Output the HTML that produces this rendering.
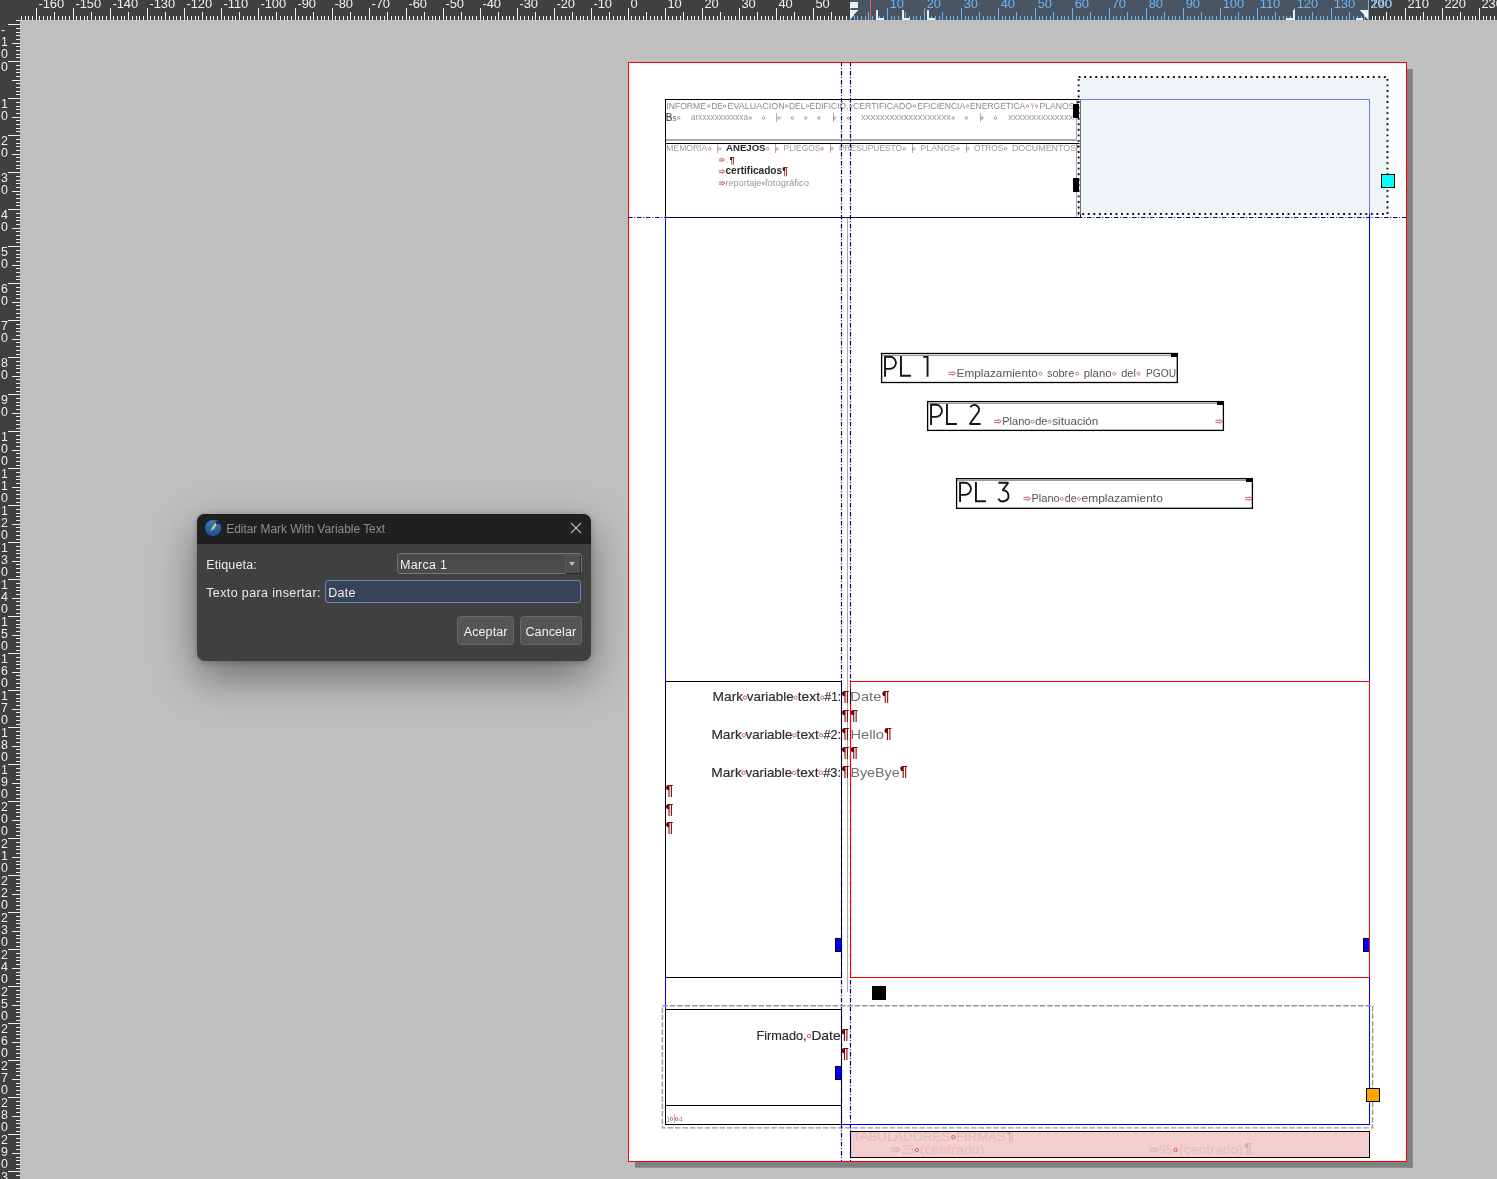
<!DOCTYPE html>
<html><head><meta charset="utf-8"><title>Scribus</title><style>
html,body{margin:0;padding:0;}
body{width:1497px;height:1179px;overflow:hidden;background:#bfbfbf;font-family:"Liberation Sans", sans-serif;position:relative;}
svg.cv{position:absolute;left:0;top:0;}
svg#pg{will-change:transform;}
svg.cv text{font-family:"Liberation Sans", sans-serif;white-space:pre;}
#dlg{position:absolute;left:197px;top:514px;width:394px;height:147px;background:#404040;border-radius:8px;overflow:hidden;box-shadow:0 16px 44px rgba(0,0,0,0.44),0 1px 6px rgba(0,0,0,0.26);color:#e8e8e8;font-size:12.5px;}
#dlg .tb{position:absolute;left:0;top:0;width:100%;height:29.6px;background:#202020;}
#dlg .ico{position:absolute;left:7px;top:4.8px;}
#dlg .tt{position:absolute;left:29.2px;top:8.1px;font-size:12px;color:#8e8e8e;white-space:nowrap;line-height:15px;letter-spacing:-0.05px;}
#dlg .cx{position:absolute;left:373.2px;top:8px;}
#dlg .lb{position:absolute;white-space:nowrap;line-height:15px;color:#ececec;}
#dlg .combo{position:absolute;left:200px;top:39.2px;width:182.6px;height:18.6px;border:1px solid #767676;border-radius:3px;background:#4b4b4b;}
#dlg .combo span{position:absolute;left:2px;top:4.2px;letter-spacing:0.3px;line-height:15px;white-space:nowrap;color:#f0f0f0;}
#dlg .combo i{position:absolute;right:-0.3px;top:0.4px;width:14px;height:17px;border-left:1px solid #5a5a5a;border-top:1px solid #5a5a5a;border-right:1px solid #2c2c2c;border-bottom:1px solid #2c2c2c;background:#505050;box-sizing:content-box;}
#dlg .combo i:after{content:"";position:absolute;left:3.2px;top:6.5px;border-left:3.8px solid transparent;border-right:3.8px solid transparent;border-top:4.4px solid #bcbcbc;}
#dlg .inp{position:absolute;left:128.4px;top:66.2px;width:253.6px;height:20.6px;border:1.7px solid #6c84b8;border-radius:3px;background:#394357;}
#dlg .inp span{position:absolute;left:1.8px;top:4.6px;letter-spacing:0.3px;line-height:15px;color:#f2f2f2;}
#dlg .btn{position:absolute;top:101.9px;height:27.1px;border:1px solid #686868;border-radius:3.5px;background:#555555;}
#dlg .btn span{position:absolute;left:0;right:0;top:8.2px;letter-spacing:0.1px;text-align:center;line-height:15px;color:#f2f2f2;}
</style></head>
<body>
<svg class="cv" id="pg" width="1497" height="1179" viewBox="0 0 1497 1179" shape-rendering="crispEdges">
<g>
<rect x="635" y="1162" width="777.7" height="5.7" fill="#808080" shape-rendering="geometricPrecision"/>
<rect x="1407" y="69" width="5.7" height="1098.7" fill="#808080" shape-rendering="geometricPrecision"/>
<rect x="628" y="62" width="779" height="1100" fill="#ffffff" />
<rect x="628.5" y="62.5" width="778" height="1099" fill="none" stroke="#ff0000" stroke-width="1"/>
<rect x="665.5" y="99.5" width="704" height="1025" fill="none" stroke="#0000ff" stroke-width="1"/>
<rect x="847" y="218" width="1" height="774" fill="#aaaaaa" />
<rect x="665" y="99" width="416" height="1" fill="#000" />
<rect x="665" y="99" width="1" height="45" fill="#000" />
<rect x="666" y="139" width="411" height="2" fill="#a8a8a8" />
<rect x="1076" y="100" width="1" height="41" fill="#a8a8a8" />
<rect x="1076" y="144" width="1" height="73" fill="#a8a8a8" />
<rect x="665" y="143" width="416" height="1" fill="#000" />
<rect x="665" y="143" width="1" height="75" fill="#000" />
<rect x="665" y="217" width="416" height="1" fill="#000" />
<rect x="1080" y="99" width="1" height="119" fill="#000" />
<text x="666.3" y="108.7" font-size="9.8" fill="#8a8a8a" textLength="39.7" lengthAdjust="spacingAndGlyphs" >INFORME</text>
<circle cx="708.8" cy="106.054" r="1.25" fill="none" stroke="#b83a3a" stroke-width="0.55" shape-rendering="geometricPrecision"/>
<text x="711.4" y="108.7" font-size="9.8" fill="#8a8a8a" textLength="11.2" lengthAdjust="spacingAndGlyphs" >DE</text>
<circle cx="724.6" cy="106.054" r="1.25" fill="none" stroke="#b83a3a" stroke-width="0.55" shape-rendering="geometricPrecision"/>
<text x="727.5" y="108.7" font-size="9.8" fill="#8a8a8a" textLength="57.3" lengthAdjust="spacingAndGlyphs" >EVALUACION</text>
<circle cx="786.6" cy="106.054" r="1.25" fill="none" stroke="#b83a3a" stroke-width="0.55" shape-rendering="geometricPrecision"/>
<text x="788.9" y="108.7" font-size="9.8" fill="#8a8a8a" textLength="16.5" lengthAdjust="spacingAndGlyphs" >DEL</text>
<circle cx="807.5" cy="106.054" r="1.25" fill="none" stroke="#b83a3a" stroke-width="0.55" shape-rendering="geometricPrecision"/>
<text x="809.6" y="108.7" font-size="9.8" fill="#8a8a8a" textLength="38.8" lengthAdjust="spacingAndGlyphs" >EDIFICIO,</text>
<circle cx="850.8" cy="106.054" r="1.25" fill="none" stroke="#b83a3a" stroke-width="0.55" shape-rendering="geometricPrecision"/>
<text x="853" y="108.7" font-size="9.8" fill="#8a8a8a" textLength="59" lengthAdjust="spacingAndGlyphs" >CERTIFICADO</text>
<circle cx="914.3" cy="106.054" r="1.25" fill="none" stroke="#b83a3a" stroke-width="0.55" shape-rendering="geometricPrecision"/>
<text x="917.2" y="108.7" font-size="9.8" fill="#8a8a8a" textLength="48.0" lengthAdjust="spacingAndGlyphs" >EFICIENCIA</text>
<circle cx="967.4" cy="106.054" r="1.25" fill="none" stroke="#b83a3a" stroke-width="0.55" shape-rendering="geometricPrecision"/>
<text x="969.9" y="108.7" font-size="9.8" fill="#8a8a8a" textLength="55.4" lengthAdjust="spacingAndGlyphs" >ENERGETICA</text>
<circle cx="1027.5" cy="106.054" r="1.25" fill="none" stroke="#b83a3a" stroke-width="0.55" shape-rendering="geometricPrecision"/>
<text x="1030.4" y="108.7" font-size="9.8" fill="#8a8a8a" textLength="3.8" lengthAdjust="spacingAndGlyphs" >Y</text>
<circle cx="1036.5" cy="106.054" r="1.25" fill="none" stroke="#b83a3a" stroke-width="0.55" shape-rendering="geometricPrecision"/>
<text x="1039.4" y="108.7" font-size="9.8" fill="#8a8a8a" textLength="35.1" lengthAdjust="spacingAndGlyphs" >PLANOS</text>
<text x="665.8" y="120.5" font-size="10.3" fill="#444" textLength="6.6" lengthAdjust="spacingAndGlyphs"  stroke="#444" stroke-width="0.16">B</text>
<text x="672.6" y="120.5" font-size="8.4" fill="#666" textLength="4" lengthAdjust="spacingAndGlyphs" >s</text>
<circle cx="678.8" cy="117.978" r="1.25" fill="none" stroke="#b83a3a" stroke-width="0.55" shape-rendering="geometricPrecision"/>
<text x="691" y="120.3" font-size="8.6" fill="#9a9a9a" textLength="57" lengthAdjust="spacingAndGlyphs" >arxxxxxxxxxxxa</text>
<circle cx="750.3" cy="117.978" r="1.25" fill="none" stroke="#b83a3a" stroke-width="0.55" shape-rendering="geometricPrecision"/>
<circle cx="763.6" cy="117.978" r="1.25" fill="none" stroke="#b83a3a" stroke-width="0.55" shape-rendering="geometricPrecision"/>
<rect x="776" y="113" width="1" height="9" fill="#b0b0b0" />
<circle cx="779" cy="117.978" r="1.25" fill="none" stroke="#b83a3a" stroke-width="0.55" shape-rendering="geometricPrecision"/>
<circle cx="792.4" cy="117.978" r="1.25" fill="none" stroke="#b83a3a" stroke-width="0.55" shape-rendering="geometricPrecision"/>
<circle cx="805.7" cy="117.978" r="1.25" fill="none" stroke="#b83a3a" stroke-width="0.55" shape-rendering="geometricPrecision"/>
<circle cx="819" cy="117.978" r="1.25" fill="none" stroke="#b83a3a" stroke-width="0.55" shape-rendering="geometricPrecision"/>
<rect x="833" y="113" width="1" height="9" fill="#b0b0b0" />
<circle cx="834.6" cy="117.978" r="1.25" fill="none" stroke="#b83a3a" stroke-width="0.55" shape-rendering="geometricPrecision"/>
<circle cx="848.2" cy="117.978" r="1.25" fill="none" stroke="#b83a3a" stroke-width="0.55" shape-rendering="geometricPrecision"/>
<text x="861" y="120.3" font-size="8.6" fill="#9a9a9a" textLength="90" lengthAdjust="spacingAndGlyphs" >xxxxxxxxxxxxxxxxxxx</text>
<circle cx="953.3" cy="117.978" r="1.25" fill="none" stroke="#b83a3a" stroke-width="0.55" shape-rendering="geometricPrecision"/>
<circle cx="966.3" cy="117.978" r="1.25" fill="none" stroke="#b83a3a" stroke-width="0.55" shape-rendering="geometricPrecision"/>
<rect x="980" y="113" width="1" height="9" fill="#b0b0b0" />
<circle cx="981.9" cy="117.978" r="1.25" fill="none" stroke="#b83a3a" stroke-width="0.55" shape-rendering="geometricPrecision"/>
<circle cx="995.4" cy="117.978" r="1.25" fill="none" stroke="#b83a3a" stroke-width="0.55" shape-rendering="geometricPrecision"/>
<text x="1008.3" y="120.3" font-size="8.6" fill="#9a9a9a" textLength="65.2" lengthAdjust="spacingAndGlyphs" >xxxxxxxxxxxxxx</text>
<text x="666.3" y="151" font-size="8.2" fill="#9a9a9a" textLength="40.9" lengthAdjust="spacingAndGlyphs" >MEMORIA</text>
<circle cx="709.6" cy="148.786" r="1.25" fill="none" stroke="#b83a3a" stroke-width="0.55" shape-rendering="geometricPrecision"/>
<rect x="717" y="144" width="1" height="9" fill="#b0b0b0" />
<circle cx="719.7" cy="148.786" r="1.25" fill="none" stroke="#b83a3a" stroke-width="0.55" shape-rendering="geometricPrecision"/>
<circle cx="767.7" cy="148.786" r="1.25" fill="none" stroke="#b83a3a" stroke-width="0.55" shape-rendering="geometricPrecision"/>
<rect x="775" y="144" width="1" height="9" fill="#b0b0b0" />
<circle cx="777" cy="148.786" r="1.25" fill="none" stroke="#b83a3a" stroke-width="0.55" shape-rendering="geometricPrecision"/>
<text x="783.6" y="151" font-size="8.2" fill="#9a9a9a" textLength="36.6" lengthAdjust="spacingAndGlyphs" >PLIEGOS</text>
<circle cx="822.2" cy="148.786" r="1.25" fill="none" stroke="#b83a3a" stroke-width="0.55" shape-rendering="geometricPrecision"/>
<rect x="830" y="144" width="1" height="9" fill="#b0b0b0" />
<circle cx="831.9" cy="148.786" r="1.25" fill="none" stroke="#b83a3a" stroke-width="0.55" shape-rendering="geometricPrecision"/>
<text x="839" y="151" font-size="8.2" fill="#9a9a9a" textLength="63" lengthAdjust="spacingAndGlyphs" >PRESUPUESTO</text>
<circle cx="904.3" cy="148.786" r="1.25" fill="none" stroke="#b83a3a" stroke-width="0.55" shape-rendering="geometricPrecision"/>
<rect x="912" y="144" width="1" height="9" fill="#b0b0b0" />
<circle cx="913.8" cy="148.786" r="1.25" fill="none" stroke="#b83a3a" stroke-width="0.55" shape-rendering="geometricPrecision"/>
<text x="920.6" y="151" font-size="8.2" fill="#9a9a9a" textLength="35.1" lengthAdjust="spacingAndGlyphs" >PLANOS</text>
<circle cx="957.9" cy="148.786" r="1.25" fill="none" stroke="#b83a3a" stroke-width="0.55" shape-rendering="geometricPrecision"/>
<rect x="966" y="144" width="1" height="9" fill="#b0b0b0" />
<circle cx="967.7" cy="148.786" r="1.25" fill="none" stroke="#b83a3a" stroke-width="0.55" shape-rendering="geometricPrecision"/>
<text x="973.9" y="151" font-size="8.2" fill="#9a9a9a" textLength="29.3" lengthAdjust="spacingAndGlyphs" >OTROS</text>
<circle cx="1005.4" cy="148.786" r="1.25" fill="none" stroke="#b83a3a" stroke-width="0.55" shape-rendering="geometricPrecision"/>
<text x="1011.9" y="151" font-size="8.2" fill="#9a9a9a" textLength="64.4" lengthAdjust="spacingAndGlyphs" >DOCUMENTOS</text>
<text x="726.1" y="151" font-size="9" fill="#2a2a2a" font-weight="bold" textLength="39.4" lengthAdjust="spacingAndGlyphs" >ANEJOS</text>
<rect x="1077" y="101" width="1" height="3" fill="#d24040" />
<rect x="1077" y="145" width="1" height="3" fill="#d24040" />
<path d="M718.8 159.00H722.40M718.8 160.80H722.40M721.60 158.10L724.60 159.9L721.60 161.70" fill="none" stroke="#b83a3a" stroke-width="0.75" shape-rendering="geometricPrecision"/>
<text x="725.2" y="163" font-size="6" fill="#999" >..</text>
<text x="729.5" y="162.7" font-size="9.3" fill="#7a0000" font-weight="bold" >¶</text>
<path d="M718.8 170.65H722.80M718.8 172.55H722.80M722.00 169.70L725.00 171.6L722.00 173.50" fill="none" stroke="#b83a3a" stroke-width="0.75" shape-rendering="geometricPrecision"/>
<text x="725.5" y="174.4" font-size="10" fill="#2a2a2a" font-weight="bold" textLength="56.6" lengthAdjust="spacingAndGlyphs" >certificados</text>
<text x="782.3" y="175.3" font-size="10" fill="#7a0000" font-weight="bold" textLength="5.6" lengthAdjust="spacingAndGlyphs" >¶</text>
<path d="M718.8 182.25H722.80M718.8 184.15H722.80M722.00 181.30L725.00 183.2L722.00 185.10" fill="none" stroke="#b83a3a" stroke-width="0.75" shape-rendering="geometricPrecision"/>
<text x="725.5" y="186" font-size="9.4" fill="#999" textLength="35.8" lengthAdjust="spacingAndGlyphs" >reportaje</text>
<circle cx="763.2" cy="183.4" r="1.1" fill="none" stroke="#b83a3a" stroke-width="0.65" shape-rendering="geometricPrecision"/>
<text x="765" y="186" font-size="9.4" fill="#999" textLength="44" lengthAdjust="spacingAndGlyphs" >fotográfico</text>
<rect x="1073" y="104" width="6" height="14" fill="#000" />
<rect x="1073" y="178" width="6" height="14" fill="#000" />
<rect x="1079" y="77" width="308.5" height="137" fill="#dfe9f3" fill-opacity="0.5"/>
<rect x="1078.6" y="77" width="308.9" height="137" fill="none" stroke="#111" stroke-width="1.9" stroke-dasharray="1.9 3.65" shape-rendering="geometricPrecision"/>
<rect x="1381.5" y="174.5" width="13" height="13" fill="#00ffff" stroke="#000" stroke-width="1"/>
<rect x="881.6" y="353.5" width="295.70" height="29.00" fill="none" stroke="#000" stroke-width="1.3" shape-rendering="geometricPrecision"/>
<rect x="882" y="355" width="290" height="1" fill="#9a9a9a" />
<rect x="1171" y="353" width="7" height="4" fill="#000" />
<path d="M885.05 376.70V356.80h4.85a6.05 6.05 0 0 1 0 12.1h-4.85M900.95 355.90V375.80H910.90M923.20 356.90H927.55V376.70" fill="none" stroke="#151515" stroke-width="1.9" stroke-linejoin="miter" stroke-miterlimit="2" shape-rendering="geometricPrecision"/>
<rect x="927.6" y="401.6" width="295.80" height="28.80" fill="none" stroke="#000" stroke-width="1.3" shape-rendering="geometricPrecision"/>
<rect x="928" y="403" width="290" height="1" fill="#9a9a9a" />
<rect x="1217" y="401" width="7" height="4" fill="#000" />
<path d="M931.05 424.95V404.80h4.85a6.05 6.05 0 0 1 0 12.1h-4.85M946.95 403.90V424.05H956.90M970.40 407.20A4.55 4.55 0 0 1 978.43 411.96L969.70 424.05H980.60" fill="none" stroke="#151515" stroke-width="1.9" stroke-linejoin="miter" stroke-miterlimit="2" shape-rendering="geometricPrecision"/>
<rect x="956.6" y="478.7" width="295.80" height="29.60" fill="none" stroke="#000" stroke-width="1.3" shape-rendering="geometricPrecision"/>
<rect x="957" y="480" width="290" height="1" fill="#9a9a9a" />
<rect x="1246" y="478" width="7" height="4" fill="#000" />
<path d="M960.05 502.10V482.80h4.85a6.05 6.05 0 0 1 0 12.1h-4.85M975.95 481.90V501.20H985.90M998.40 482.80H1008.20L1002.60 490.40A5.5 5.5 0 1 1 998.30 498.80" fill="none" stroke="#151515" stroke-width="1.9" stroke-linejoin="miter" stroke-miterlimit="2" shape-rendering="geometricPrecision"/>
<path d="M948.4 372.35H953.40M948.4 374.45H953.40M952.60 371.30L955.60 373.4L952.60 375.50" fill="none" stroke="#b83a3a" stroke-width="0.75" shape-rendering="geometricPrecision"/>
<text x="956.6" y="376.6" font-size="11" fill="#555" textLength="81.2" lengthAdjust="spacingAndGlyphs" >Emplazamiento</text>
<circle cx="1040.5" cy="373.63" r="1.5" fill="none" stroke="#b83a3a" stroke-width="0.65" shape-rendering="geometricPrecision"/>
<text x="1047.1" y="376.6" font-size="11" fill="#555" textLength="27.2" lengthAdjust="spacingAndGlyphs" >sobre</text>
<circle cx="1077" cy="373.63" r="1.5" fill="none" stroke="#b83a3a" stroke-width="0.65" shape-rendering="geometricPrecision"/>
<text x="1083.8" y="376.6" font-size="11" fill="#555" textLength="27.7" lengthAdjust="spacingAndGlyphs" >plano</text>
<circle cx="1114.3" cy="373.63" r="1.5" fill="none" stroke="#b83a3a" stroke-width="0.65" shape-rendering="geometricPrecision"/>
<text x="1121.2" y="376.6" font-size="11" fill="#555" textLength="14.7" lengthAdjust="spacingAndGlyphs" >del</text>
<circle cx="1138.5" cy="373.63" r="1.5" fill="none" stroke="#b83a3a" stroke-width="0.65" shape-rendering="geometricPrecision"/>
<text x="1146" y="376.6" font-size="11" fill="#555" textLength="30" lengthAdjust="spacingAndGlyphs" >PGOU</text>
<path d="M994.1 420.35H999.10M994.1 422.45H999.10M998.30 419.30L1001.30 421.4L998.30 423.50" fill="none" stroke="#b83a3a" stroke-width="0.75" shape-rendering="geometricPrecision"/>
<text x="1002.3" y="424.6" font-size="11" fill="#555" textLength="28.1" lengthAdjust="spacingAndGlyphs" >Plano</text>
<circle cx="1032.6" cy="421.63" r="1.5" fill="none" stroke="#b83a3a" stroke-width="0.65" shape-rendering="geometricPrecision"/>
<text x="1035.2" y="424.6" font-size="11" fill="#555" textLength="12.3" lengthAdjust="spacingAndGlyphs" >de</text>
<circle cx="1049.6" cy="421.63" r="1.5" fill="none" stroke="#b83a3a" stroke-width="0.65" shape-rendering="geometricPrecision"/>
<text x="1052.3" y="424.6" font-size="11" fill="#555" textLength="46.0" lengthAdjust="spacingAndGlyphs" >situación</text>
<path d="M1215.4 420.35H1220.20M1215.4 422.45H1220.20M1219.40 419.30L1222.40 421.4L1219.40 423.50" fill="none" stroke="#b83a3a" stroke-width="0.75" shape-rendering="geometricPrecision"/>
<path d="M1023.4 497.55H1028.40M1023.4 499.65H1028.40M1027.60 496.50L1030.60 498.6L1027.60 500.70" fill="none" stroke="#b83a3a" stroke-width="0.75" shape-rendering="geometricPrecision"/>
<text x="1031.5" y="501.8" font-size="11" fill="#555" textLength="28.1" lengthAdjust="spacingAndGlyphs" >Plano</text>
<circle cx="1061.8" cy="498.83" r="1.5" fill="none" stroke="#b83a3a" stroke-width="0.65" shape-rendering="geometricPrecision"/>
<text x="1064.7" y="501.8" font-size="11" fill="#555" textLength="12.0" lengthAdjust="spacingAndGlyphs" >de</text>
<circle cx="1078.8" cy="498.83" r="1.5" fill="none" stroke="#b83a3a" stroke-width="0.65" shape-rendering="geometricPrecision"/>
<text x="1081.5" y="501.8" font-size="11" fill="#555" textLength="81.3" lengthAdjust="spacingAndGlyphs" >emplazamiento</text>
<path d="M1245 497.55H1249.80M1245 499.65H1249.80M1249.00 496.50L1252.00 498.6L1249.00 500.70" fill="none" stroke="#b83a3a" stroke-width="0.75" shape-rendering="geometricPrecision"/>
<rect x="665.5" y="681.5" width="176" height="296" fill="none" stroke="#000" stroke-width="1"/>
<rect x="835.5" y="938.5" width="6" height="13" fill="#0000ff" stroke="#000" stroke-width="1"/>
<rect x="1363.5" y="938.5" width="6" height="13" fill="#0000ff" stroke="#000" stroke-width="1"/>
<text x="712.6" y="701.3" font-size="13.4" fill="#2a2a2a" textLength="30.6" lengthAdjust="spacingAndGlyphs"  stroke="#2a2a2a" stroke-width="0.16">Mark</text>
<circle cx="745.0" cy="697.6819999999999" r="1.7" fill="none" stroke="#c23b3b" stroke-width="0.75" shape-rendering="geometricPrecision"/>
<text x="746.8000000000001" y="701.3" font-size="13.4" fill="#2a2a2a" textLength="46.8" lengthAdjust="spacingAndGlyphs"  stroke="#2a2a2a" stroke-width="0.16">variable</text>
<circle cx="795.6" cy="697.6819999999999" r="1.7" fill="none" stroke="#c23b3b" stroke-width="0.75" shape-rendering="geometricPrecision"/>
<text x="797.8000000000001" y="701.3" font-size="13.4" fill="#2a2a2a" textLength="22.2" lengthAdjust="spacingAndGlyphs"  stroke="#2a2a2a" stroke-width="0.16">text</text>
<circle cx="822.2" cy="697.6819999999999" r="1.7" fill="none" stroke="#c23b3b" stroke-width="0.75" shape-rendering="geometricPrecision"/>
<text x="824.6" y="701.3" font-size="13.4" fill="#2a2a2a" textLength="16.4" lengthAdjust="spacingAndGlyphs"  stroke="#2a2a2a" stroke-width="0.16">#1:</text>
<text x="841.41" y="700.8" font-size="14" fill="#7a0000" font-weight="bold" >¶</text>
<text x="711.4" y="738.9" font-size="13.4" fill="#2a2a2a" textLength="30.6" lengthAdjust="spacingAndGlyphs"  stroke="#2a2a2a" stroke-width="0.16">Mark</text>
<circle cx="743.8" cy="735.2819999999999" r="1.7" fill="none" stroke="#c23b3b" stroke-width="0.75" shape-rendering="geometricPrecision"/>
<text x="745.6" y="738.9" font-size="13.4" fill="#2a2a2a" textLength="46.8" lengthAdjust="spacingAndGlyphs"  stroke="#2a2a2a" stroke-width="0.16">variable</text>
<circle cx="794.4" cy="735.2819999999999" r="1.7" fill="none" stroke="#c23b3b" stroke-width="0.75" shape-rendering="geometricPrecision"/>
<text x="796.6" y="738.9" font-size="13.4" fill="#2a2a2a" textLength="22.2" lengthAdjust="spacingAndGlyphs"  stroke="#2a2a2a" stroke-width="0.16">text</text>
<circle cx="821.0" cy="735.2819999999999" r="1.7" fill="none" stroke="#c23b3b" stroke-width="0.75" shape-rendering="geometricPrecision"/>
<text x="823.4" y="738.9" font-size="13.4" fill="#2a2a2a" textLength="17.6" lengthAdjust="spacingAndGlyphs"  stroke="#2a2a2a" stroke-width="0.16">#2:</text>
<text x="841.41" y="738.4" font-size="14" fill="#7a0000" font-weight="bold" >¶</text>
<text x="711.2" y="776.5" font-size="13.4" fill="#2a2a2a" textLength="30.6" lengthAdjust="spacingAndGlyphs"  stroke="#2a2a2a" stroke-width="0.16">Mark</text>
<circle cx="743.6" cy="772.882" r="1.7" fill="none" stroke="#c23b3b" stroke-width="0.75" shape-rendering="geometricPrecision"/>
<text x="745.4000000000001" y="776.5" font-size="13.4" fill="#2a2a2a" textLength="46.8" lengthAdjust="spacingAndGlyphs"  stroke="#2a2a2a" stroke-width="0.16">variable</text>
<circle cx="794.2" cy="772.882" r="1.7" fill="none" stroke="#c23b3b" stroke-width="0.75" shape-rendering="geometricPrecision"/>
<text x="796.4000000000001" y="776.5" font-size="13.4" fill="#2a2a2a" textLength="22.2" lengthAdjust="spacingAndGlyphs"  stroke="#2a2a2a" stroke-width="0.16">text</text>
<circle cx="820.8000000000001" cy="772.882" r="1.7" fill="none" stroke="#c23b3b" stroke-width="0.75" shape-rendering="geometricPrecision"/>
<text x="823.2" y="776.5" font-size="13.4" fill="#2a2a2a" textLength="17.8" lengthAdjust="spacingAndGlyphs"  stroke="#2a2a2a" stroke-width="0.16">#3:</text>
<text x="841.41" y="776.0" font-size="14" fill="#7a0000" font-weight="bold" >¶</text>
<text x="841.41" y="719.6" font-size="14" fill="#7a0000" font-weight="bold" >¶</text>
<text x="850.31" y="719.6" font-size="14" fill="#7a0000" font-weight="bold" >¶</text>
<text x="841.41" y="757.2" font-size="14" fill="#7a0000" font-weight="bold" >¶</text>
<text x="850.31" y="757.2" font-size="14" fill="#7a0000" font-weight="bold" >¶</text>
<text x="850.3" y="701.3" font-size="13.4" fill="#707070" textLength="31" lengthAdjust="spacingAndGlyphs" >Date</text>
<text x="881.81" y="700.8" font-size="14" fill="#7a0000" font-weight="bold" >¶</text>
<text x="850.4" y="738.9" font-size="13.4" fill="#707070" textLength="33.6" lengthAdjust="spacingAndGlyphs" >Hello</text>
<text x="884.11" y="738.4" font-size="14" fill="#7a0000" font-weight="bold" >¶</text>
<text x="850.4" y="776.5" font-size="13.4" fill="#707070" textLength="49.2" lengthAdjust="spacingAndGlyphs" >ByeBye</text>
<text x="899.81" y="776.0" font-size="14" fill="#7a0000" font-weight="bold" >¶</text>
<text x="665.51" y="794.7" font-size="14" fill="#7a0000" font-weight="bold" >¶</text>
<text x="665.51" y="813.5" font-size="14" fill="#7a0000" font-weight="bold" >¶</text>
<text x="665.51" y="832.3" font-size="14" fill="#7a0000" font-weight="bold" >¶</text>
<rect x="872" y="986" width="14" height="14" fill="#000" />
<rect x="662.4" y="1005.7" width="710.2" height="122.2" fill="none" stroke="#989898" stroke-width="1.4" stroke-dasharray="5.5 1.9" shape-rendering="geometricPrecision"/>
<rect x="665.5" y="1009.5" width="176" height="96" fill="none" stroke="#000" stroke-width="1"/>
<rect x="665.5" y="1105.5" width="176" height="19" fill="none" stroke="#000" stroke-width="1"/>
<rect x="835.5" y="1066.5" width="6" height="13" fill="#0000ff" stroke="#000" stroke-width="1"/>
<text x="756.4" y="1039.6" font-size="13.4" fill="#2a2a2a" textLength="50.2" lengthAdjust="spacingAndGlyphs"  stroke="#2a2a2a" stroke-width="0.16">Firmado,</text>
<circle cx="809" cy="1035.982" r="1.7" fill="none" stroke="#c23b3b" stroke-width="0.75" shape-rendering="geometricPrecision"/>
<text x="811.4" y="1039.6" font-size="13.4" fill="#2a2a2a" textLength="29.2" lengthAdjust="spacingAndGlyphs"  stroke="#2a2a2a" stroke-width="0.16">Date</text>
<text x="841.11" y="1039.1" font-size="14" fill="#7a0000" font-weight="bold" >¶</text>
<text x="841.11" y="1057.9" font-size="14" fill="#7a0000" font-weight="bold" >¶</text>
<text x="666.4" y="1121.8" font-size="8" fill="#8a8a8a" textLength="3.4" lengthAdjust="spacingAndGlyphs" >1</text>
<ellipse cx="671.5" cy="1119" rx="1.15" ry="1.7" fill="none" stroke="#c24444" stroke-width="0.75" shape-rendering="geometricPrecision"/>
<rect x="674" y="1114" width="1" height="9" fill="#bdbdbd" />
<ellipse cx="676.5" cy="1119" rx="1.15" ry="1.7" fill="none" stroke="#c24444" stroke-width="0.75" shape-rendering="geometricPrecision"/>
<text x="678.2" y="1121.8" font-size="8" fill="#9a9a9a" textLength="4.6" lengthAdjust="spacingAndGlyphs" >4</text>
<rect x="1366.5" y="1088.5" width="13" height="13" fill="#ffa500" stroke="#000" stroke-width="1"/>
<rect x="850.5" y="1131.5" width="519" height="26" fill="#f4cfcf" stroke="#000" stroke-width="1"/>
<clipPath id="pk"><rect x="851" y="1132" width="518" height="25"/></clipPath><g clip-path="url(#pk)">
<text x="852.6" y="1140.8" font-size="13.4" fill="#e2bcbc" textLength="97.6" lengthAdjust="spacingAndGlyphs" >TABULADORES</text>
<circle cx="953.4" cy="1137.182" r="1.7" fill="none" stroke="#c23b3b" stroke-width="0.75" shape-rendering="geometricPrecision"/>
<text x="956.2" y="1140.8" font-size="13.4" fill="#e2bcbc" textLength="49.4" lengthAdjust="spacingAndGlyphs" >FIRMAS</text>
<text x="1006.51" y="1140.3" font-size="14" fill="#dba8a8" >¶</text>
<path d="M891.4 1148.35H897.80M891.4 1150.85H897.80M897.00 1147.10L900.00 1149.6L897.00 1152.10" fill="none" stroke="#dba8a8" stroke-width="0.9" shape-rendering="geometricPrecision"/>
<text x="901.2" y="1153.6" font-size="13.4" fill="#e2bcbc" textLength="13.0" lengthAdjust="spacingAndGlyphs" >25</text>
<circle cx="916.9" cy="1149.982" r="1.7" fill="none" stroke="#c23b3b" stroke-width="0.75" shape-rendering="geometricPrecision"/>
<text x="919.8" y="1153.6" font-size="13.4" fill="#e2bcbc" textLength="64.6" lengthAdjust="spacingAndGlyphs" >(centrado)</text>
<path d="M1150 1148.35H1156.40M1150 1150.85H1156.40M1155.60 1147.10L1158.60 1149.6L1155.60 1152.10" fill="none" stroke="#dba8a8" stroke-width="0.9" shape-rendering="geometricPrecision"/>
<text x="1159.6" y="1153.6" font-size="13.4" fill="#e2bcbc" textLength="12.8" lengthAdjust="spacingAndGlyphs" >95</text>
<circle cx="1175.6" cy="1149.982" r="1.7" fill="none" stroke="#c23b3b" stroke-width="0.75" shape-rendering="geometricPrecision"/>
<text x="1179" y="1153.6" font-size="13.4" fill="#e2bcbc" textLength="64" lengthAdjust="spacingAndGlyphs" >(centrado)</text>
<text x="1244.41" y="1153.1" font-size="14" fill="#dba8a8" >¶</text>
</g>
<line x1="841.5" y1="62" x2="841.5" y2="1161" stroke="#000080" stroke-width="1.2" stroke-dasharray="4.5 1.75 1 1.75" shape-rendering="geometricPrecision"/>
<line x1="850.5" y1="62" x2="850.5" y2="1161" stroke="#000080" stroke-width="1.2" stroke-dasharray="4.5 1.75 1 1.75" shape-rendering="geometricPrecision"/>
<line x1="628" y1="217.5" x2="1406" y2="217.5" stroke="#000080" stroke-width="1.2" stroke-dasharray="4.5 1.75 1 1.75" shape-rendering="geometricPrecision"/>
<rect x="850.5" y="681.5" width="519" height="296" fill="none" stroke="#ff0000" stroke-width="1"/>
<rect x="850" y="689" width="1" height="15" fill="#400000" />
</g>
</svg>
<svg class="cv" id="rl" width="1497" height="1179" viewBox="0 0 1497 1179" shape-rendering="crispEdges">
<rect x="0" y="0" width="1497" height="20" fill="#404040" />
<rect x="0" y="0" width="20" height="1179" fill="#404040" />
<rect x="850" y="0" width="519" height="20" fill="#4a5564" />
<path d="M21 16h1v4h-1zM25 16h1v4h-1zM28 16h1v4h-1zM32 16h1v4h-1zM36 8h1v12h-1zM39 16h1v4h-1zM43 16h1v4h-1zM47 16h1v4h-1zM50 16h1v4h-1zM54 12h1v8h-1zM58 16h1v4h-1zM62 16h1v4h-1zM65 16h1v4h-1zM69 16h1v4h-1zM73 8h1v12h-1zM76 16h1v4h-1zM80 16h1v4h-1zM84 16h1v4h-1zM87 16h1v4h-1zM91 12h1v8h-1zM95 16h1v4h-1zM99 16h1v4h-1zM102 16h1v4h-1zM106 16h1v4h-1zM110 8h1v12h-1zM113 16h1v4h-1zM117 16h1v4h-1zM121 16h1v4h-1zM124 16h1v4h-1zM128 12h1v8h-1zM132 16h1v4h-1zM136 16h1v4h-1zM139 16h1v4h-1zM143 16h1v4h-1zM147 8h1v12h-1zM150 16h1v4h-1zM154 16h1v4h-1zM158 16h1v4h-1zM161 16h1v4h-1zM165 12h1v8h-1zM169 16h1v4h-1zM173 16h1v4h-1zM176 16h1v4h-1zM180 16h1v4h-1zM184 8h1v12h-1zM187 16h1v4h-1zM191 16h1v4h-1zM195 16h1v4h-1zM198 16h1v4h-1zM202 12h1v8h-1zM206 16h1v4h-1zM210 16h1v4h-1zM213 16h1v4h-1zM217 16h1v4h-1zM221 8h1v12h-1zM224 16h1v4h-1zM228 16h1v4h-1zM232 16h1v4h-1zM235 16h1v4h-1zM239 12h1v8h-1zM243 16h1v4h-1zM247 16h1v4h-1zM250 16h1v4h-1zM254 16h1v4h-1zM258 8h1v12h-1zM261 16h1v4h-1zM265 16h1v4h-1zM269 16h1v4h-1zM272 16h1v4h-1zM276 12h1v8h-1zM280 16h1v4h-1zM284 16h1v4h-1zM287 16h1v4h-1zM291 16h1v4h-1zM295 8h1v12h-1zM298 16h1v4h-1zM302 16h1v4h-1zM306 16h1v4h-1zM310 16h1v4h-1zM313 12h1v8h-1zM317 16h1v4h-1zM321 16h1v4h-1zM324 16h1v4h-1zM328 16h1v4h-1zM332 8h1v12h-1zM335 16h1v4h-1zM339 16h1v4h-1zM343 16h1v4h-1zM347 16h1v4h-1zM350 12h1v8h-1zM354 16h1v4h-1zM358 16h1v4h-1zM361 16h1v4h-1zM365 16h1v4h-1zM369 8h1v12h-1zM372 16h1v4h-1zM376 16h1v4h-1zM380 16h1v4h-1zM384 16h1v4h-1zM387 12h1v8h-1zM391 16h1v4h-1zM395 16h1v4h-1zM398 16h1v4h-1zM402 16h1v4h-1zM406 8h1v12h-1zM409 16h1v4h-1zM413 16h1v4h-1zM417 16h1v4h-1zM421 16h1v4h-1zM424 12h1v8h-1zM428 16h1v4h-1zM432 16h1v4h-1zM435 16h1v4h-1zM439 16h1v4h-1zM443 8h1v12h-1zM446 16h1v4h-1zM450 16h1v4h-1zM454 16h1v4h-1zM458 16h1v4h-1zM461 12h1v8h-1zM465 16h1v4h-1zM469 16h1v4h-1zM472 16h1v4h-1zM476 16h1v4h-1zM480 8h1v12h-1zM483 16h1v4h-1zM487 16h1v4h-1zM491 16h1v4h-1zM495 16h1v4h-1zM498 12h1v8h-1zM502 16h1v4h-1zM506 16h1v4h-1zM509 16h1v4h-1zM513 16h1v4h-1zM517 8h1v12h-1zM520 16h1v4h-1zM524 16h1v4h-1zM528 16h1v4h-1zM532 16h1v4h-1zM535 12h1v8h-1zM539 16h1v4h-1zM543 16h1v4h-1zM546 16h1v4h-1zM550 16h1v4h-1zM554 8h1v12h-1zM557 16h1v4h-1zM561 16h1v4h-1zM565 16h1v4h-1zM569 16h1v4h-1zM572 12h1v8h-1zM576 16h1v4h-1zM580 16h1v4h-1zM583 16h1v4h-1zM587 16h1v4h-1zM591 8h1v12h-1zM594 16h1v4h-1zM598 16h1v4h-1zM602 16h1v4h-1zM606 16h1v4h-1zM609 12h1v8h-1zM613 16h1v4h-1zM617 16h1v4h-1zM620 16h1v4h-1zM624 16h1v4h-1zM628 8h1v12h-1zM631 16h1v4h-1zM635 16h1v4h-1zM639 16h1v4h-1zM643 16h1v4h-1zM646 12h1v8h-1zM650 16h1v4h-1zM654 16h1v4h-1zM657 16h1v4h-1zM661 16h1v4h-1zM665 8h1v12h-1zM668 16h1v4h-1zM672 16h1v4h-1zM676 16h1v4h-1zM680 16h1v4h-1zM683 12h1v8h-1zM687 16h1v4h-1zM691 16h1v4h-1zM694 16h1v4h-1zM698 16h1v4h-1zM702 8h1v12h-1zM705 16h1v4h-1zM709 16h1v4h-1zM713 16h1v4h-1zM717 16h1v4h-1zM720 12h1v8h-1zM724 16h1v4h-1zM728 16h1v4h-1zM731 16h1v4h-1zM735 16h1v4h-1zM739 8h1v12h-1zM742 16h1v4h-1zM746 16h1v4h-1zM750 16h1v4h-1zM754 16h1v4h-1zM757 12h1v8h-1zM761 16h1v4h-1zM765 16h1v4h-1zM768 16h1v4h-1zM772 16h1v4h-1zM776 8h1v12h-1zM780 16h1v4h-1zM783 16h1v4h-1zM787 16h1v4h-1zM791 16h1v4h-1zM794 12h1v8h-1zM798 16h1v4h-1zM802 16h1v4h-1zM805 16h1v4h-1zM809 16h1v4h-1zM813 8h1v12h-1zM817 16h1v4h-1zM820 16h1v4h-1zM824 16h1v4h-1zM828 16h1v4h-1zM831 12h1v8h-1zM835 16h1v4h-1zM839 16h1v4h-1zM842 16h1v4h-1zM846 16h1v4h-1zM1372 16h1v4h-1zM1375 16h1v4h-1zM1379 16h1v4h-1zM1383 16h1v4h-1zM1386 12h1v8h-1zM1390 16h1v4h-1zM1394 16h1v4h-1zM1398 16h1v4h-1zM1401 16h1v4h-1zM1405 8h1v12h-1zM1409 16h1v4h-1zM1412 16h1v4h-1zM1416 16h1v4h-1zM1420 16h1v4h-1zM1423 12h1v8h-1zM1427 16h1v4h-1zM1431 16h1v4h-1zM1435 16h1v4h-1zM1438 16h1v4h-1zM1442 8h1v12h-1zM1446 16h1v4h-1zM1449 16h1v4h-1zM1453 16h1v4h-1zM1457 16h1v4h-1zM1460 12h1v8h-1zM1464 16h1v4h-1zM1468 16h1v4h-1zM1472 16h1v4h-1zM1475 16h1v4h-1zM1479 8h1v12h-1zM1483 16h1v4h-1zM1486 16h1v4h-1zM1490 16h1v4h-1zM1494 16h1v4h-1z" fill="#f2f2f2"/>
<path d="M850 8h1v12h-1zM854 16h1v4h-1zM857 16h1v4h-1zM861 16h1v4h-1zM865 16h1v4h-1zM868 12h1v8h-1zM872 16h1v4h-1zM876 16h1v4h-1zM879 16h1v4h-1zM883 16h1v4h-1zM887 8h1v12h-1zM891 16h1v4h-1zM894 16h1v4h-1zM898 16h1v4h-1zM902 16h1v4h-1zM905 12h1v8h-1zM909 16h1v4h-1zM913 16h1v4h-1zM916 16h1v4h-1zM920 16h1v4h-1zM924 8h1v12h-1zM928 16h1v4h-1zM931 16h1v4h-1zM935 16h1v4h-1zM939 16h1v4h-1zM942 12h1v8h-1zM946 16h1v4h-1zM950 16h1v4h-1zM953 16h1v4h-1zM957 16h1v4h-1zM961 8h1v12h-1zM965 16h1v4h-1zM968 16h1v4h-1zM972 16h1v4h-1zM976 16h1v4h-1zM979 12h1v8h-1zM983 16h1v4h-1zM987 16h1v4h-1zM990 16h1v4h-1zM994 16h1v4h-1zM998 8h1v12h-1zM1002 16h1v4h-1zM1005 16h1v4h-1zM1009 16h1v4h-1zM1013 16h1v4h-1zM1016 12h1v8h-1zM1020 16h1v4h-1zM1024 16h1v4h-1zM1027 16h1v4h-1zM1031 16h1v4h-1zM1035 8h1v12h-1zM1039 16h1v4h-1zM1042 16h1v4h-1zM1046 16h1v4h-1zM1050 16h1v4h-1zM1053 12h1v8h-1zM1057 16h1v4h-1zM1061 16h1v4h-1zM1064 16h1v4h-1zM1068 16h1v4h-1zM1072 8h1v12h-1zM1076 16h1v4h-1zM1079 16h1v4h-1zM1083 16h1v4h-1zM1087 16h1v4h-1zM1090 12h1v8h-1zM1094 16h1v4h-1zM1098 16h1v4h-1zM1101 16h1v4h-1zM1105 16h1v4h-1zM1109 8h1v12h-1zM1113 16h1v4h-1zM1116 16h1v4h-1zM1120 16h1v4h-1zM1124 16h1v4h-1zM1127 12h1v8h-1zM1131 16h1v4h-1zM1135 16h1v4h-1zM1138 16h1v4h-1zM1142 16h1v4h-1zM1146 8h1v12h-1zM1150 16h1v4h-1zM1153 16h1v4h-1zM1157 16h1v4h-1zM1161 16h1v4h-1zM1164 12h1v8h-1zM1168 16h1v4h-1zM1172 16h1v4h-1zM1175 16h1v4h-1zM1179 16h1v4h-1zM1183 8h1v12h-1zM1187 16h1v4h-1zM1190 16h1v4h-1zM1194 16h1v4h-1zM1198 16h1v4h-1zM1201 12h1v8h-1zM1205 16h1v4h-1zM1209 16h1v4h-1zM1212 16h1v4h-1zM1216 16h1v4h-1zM1220 8h1v12h-1zM1224 16h1v4h-1zM1227 16h1v4h-1zM1231 16h1v4h-1zM1235 16h1v4h-1zM1238 12h1v8h-1zM1242 16h1v4h-1zM1246 16h1v4h-1zM1249 16h1v4h-1zM1253 16h1v4h-1zM1257 8h1v12h-1zM1261 16h1v4h-1zM1264 16h1v4h-1zM1268 16h1v4h-1zM1272 16h1v4h-1zM1275 12h1v8h-1zM1279 16h1v4h-1zM1283 16h1v4h-1zM1286 16h1v4h-1zM1290 16h1v4h-1zM1294 8h1v12h-1zM1298 16h1v4h-1zM1301 16h1v4h-1zM1305 16h1v4h-1zM1309 16h1v4h-1zM1312 12h1v8h-1zM1316 16h1v4h-1zM1320 16h1v4h-1zM1323 16h1v4h-1zM1327 16h1v4h-1zM1331 8h1v12h-1zM1335 16h1v4h-1zM1338 16h1v4h-1zM1342 16h1v4h-1zM1346 16h1v4h-1zM1349 12h1v8h-1zM1353 16h1v4h-1zM1357 16h1v4h-1zM1361 16h1v4h-1zM1364 16h1v4h-1z" fill="#6db4f5"/>
<rect x="1368" y="0" width="1" height="20" fill="#6db4f5" />
<path d="M16 20h4v1h-4zM8 24h12v1h-12zM16 28h4v1h-4zM16 32h4v1h-4zM16 35h4v1h-4zM16 39h4v1h-4zM12 43h8v1h-8zM16 46h4v1h-4zM16 50h4v1h-4zM16 54h4v1h-4zM16 57h4v1h-4zM8 61h12v1h-12zM16 65h4v1h-4zM16 69h4v1h-4zM16 72h4v1h-4zM16 76h4v1h-4zM12 80h8v1h-8zM16 83h4v1h-4zM16 87h4v1h-4zM16 91h4v1h-4zM16 94h4v1h-4zM8 98h12v1h-12zM16 102h4v1h-4zM16 106h4v1h-4zM16 109h4v1h-4zM16 113h4v1h-4zM12 117h8v1h-8zM16 120h4v1h-4zM16 124h4v1h-4zM16 128h4v1h-4zM16 131h4v1h-4zM8 135h12v1h-12zM16 139h4v1h-4zM16 143h4v1h-4zM16 146h4v1h-4zM16 150h4v1h-4zM12 154h8v1h-8zM16 157h4v1h-4zM16 161h4v1h-4zM16 165h4v1h-4zM16 168h4v1h-4zM8 172h12v1h-12zM16 176h4v1h-4zM16 180h4v1h-4zM16 183h4v1h-4zM16 187h4v1h-4zM12 191h8v1h-8zM16 194h4v1h-4zM16 198h4v1h-4zM16 202h4v1h-4zM16 205h4v1h-4zM8 209h12v1h-12zM16 213h4v1h-4zM16 217h4v1h-4zM16 220h4v1h-4zM16 224h4v1h-4zM12 228h8v1h-8zM16 231h4v1h-4zM16 235h4v1h-4zM16 239h4v1h-4zM16 242h4v1h-4zM8 246h12v1h-12zM16 250h4v1h-4zM16 254h4v1h-4zM16 257h4v1h-4zM16 261h4v1h-4zM12 265h8v1h-8zM16 268h4v1h-4zM16 272h4v1h-4zM16 276h4v1h-4zM16 279h4v1h-4zM8 283h12v1h-12zM16 287h4v1h-4zM16 291h4v1h-4zM16 294h4v1h-4zM16 298h4v1h-4zM12 302h8v1h-8zM16 305h4v1h-4zM16 309h4v1h-4zM16 313h4v1h-4zM16 317h4v1h-4zM8 320h12v1h-12zM16 324h4v1h-4zM16 328h4v1h-4zM16 331h4v1h-4zM16 335h4v1h-4zM12 339h8v1h-8zM16 342h4v1h-4zM16 346h4v1h-4zM16 350h4v1h-4zM16 354h4v1h-4zM8 357h12v1h-12zM16 361h4v1h-4zM16 365h4v1h-4zM16 368h4v1h-4zM16 372h4v1h-4zM12 376h8v1h-8zM16 379h4v1h-4zM16 383h4v1h-4zM16 387h4v1h-4zM16 391h4v1h-4zM8 394h12v1h-12zM16 398h4v1h-4zM16 402h4v1h-4zM16 405h4v1h-4zM16 409h4v1h-4zM12 413h8v1h-8zM16 416h4v1h-4zM16 420h4v1h-4zM16 424h4v1h-4zM16 428h4v1h-4zM8 431h12v1h-12zM16 435h4v1h-4zM16 439h4v1h-4zM16 442h4v1h-4zM16 446h4v1h-4zM12 450h8v1h-8zM16 453h4v1h-4zM16 457h4v1h-4zM16 461h4v1h-4zM16 465h4v1h-4zM8 468h12v1h-12zM16 472h4v1h-4zM16 476h4v1h-4zM16 479h4v1h-4zM16 483h4v1h-4zM12 487h8v1h-8zM16 490h4v1h-4zM16 494h4v1h-4zM16 498h4v1h-4zM16 502h4v1h-4zM8 505h12v1h-12zM16 509h4v1h-4zM16 513h4v1h-4zM16 516h4v1h-4zM16 520h4v1h-4zM12 524h8v1h-8zM16 527h4v1h-4zM16 531h4v1h-4zM16 535h4v1h-4zM16 539h4v1h-4zM8 542h12v1h-12zM16 546h4v1h-4zM16 550h4v1h-4zM16 553h4v1h-4zM16 557h4v1h-4zM12 561h8v1h-8zM16 564h4v1h-4zM16 568h4v1h-4zM16 572h4v1h-4zM16 576h4v1h-4zM8 579h12v1h-12zM16 583h4v1h-4zM16 587h4v1h-4zM16 590h4v1h-4zM16 594h4v1h-4zM12 598h8v1h-8zM16 601h4v1h-4zM16 605h4v1h-4zM16 609h4v1h-4zM16 613h4v1h-4zM8 616h12v1h-12zM16 620h4v1h-4zM16 624h4v1h-4zM16 627h4v1h-4zM16 631h4v1h-4zM12 635h8v1h-8zM16 638h4v1h-4zM16 642h4v1h-4zM16 646h4v1h-4zM16 650h4v1h-4zM8 653h12v1h-12zM16 657h4v1h-4zM16 661h4v1h-4zM16 664h4v1h-4zM16 668h4v1h-4zM12 672h8v1h-8zM16 675h4v1h-4zM16 679h4v1h-4zM16 683h4v1h-4zM16 687h4v1h-4zM8 690h12v1h-12zM16 694h4v1h-4zM16 698h4v1h-4zM16 701h4v1h-4zM16 705h4v1h-4zM12 709h8v1h-8zM16 712h4v1h-4zM16 716h4v1h-4zM16 720h4v1h-4zM16 724h4v1h-4zM8 727h12v1h-12zM16 731h4v1h-4zM16 735h4v1h-4zM16 738h4v1h-4zM16 742h4v1h-4zM12 746h8v1h-8zM16 749h4v1h-4zM16 753h4v1h-4zM16 757h4v1h-4zM16 761h4v1h-4zM8 764h12v1h-12zM16 768h4v1h-4zM16 772h4v1h-4zM16 775h4v1h-4zM16 779h4v1h-4zM12 783h8v1h-8zM16 787h4v1h-4zM16 790h4v1h-4zM16 794h4v1h-4zM16 798h4v1h-4zM8 801h12v1h-12zM16 805h4v1h-4zM16 809h4v1h-4zM16 812h4v1h-4zM16 816h4v1h-4zM12 820h8v1h-8zM16 824h4v1h-4zM16 827h4v1h-4zM16 831h4v1h-4zM16 835h4v1h-4zM8 838h12v1h-12zM16 842h4v1h-4zM16 846h4v1h-4zM16 849h4v1h-4zM16 853h4v1h-4zM12 857h8v1h-8zM16 861h4v1h-4zM16 864h4v1h-4zM16 868h4v1h-4zM16 872h4v1h-4zM8 875h12v1h-12zM16 879h4v1h-4zM16 883h4v1h-4zM16 886h4v1h-4zM16 890h4v1h-4zM12 894h8v1h-8zM16 898h4v1h-4zM16 901h4v1h-4zM16 905h4v1h-4zM16 909h4v1h-4zM8 912h12v1h-12zM16 916h4v1h-4zM16 920h4v1h-4zM16 923h4v1h-4zM16 927h4v1h-4zM12 931h8v1h-8zM16 935h4v1h-4zM16 938h4v1h-4zM16 942h4v1h-4zM16 946h4v1h-4zM8 949h12v1h-12zM16 953h4v1h-4zM16 957h4v1h-4zM16 960h4v1h-4zM16 964h4v1h-4zM12 968h8v1h-8zM16 972h4v1h-4zM16 975h4v1h-4zM16 979h4v1h-4zM16 983h4v1h-4zM8 986h12v1h-12zM16 990h4v1h-4zM16 994h4v1h-4zM16 997h4v1h-4zM16 1001h4v1h-4zM12 1005h8v1h-8zM16 1009h4v1h-4zM16 1012h4v1h-4zM16 1016h4v1h-4zM16 1020h4v1h-4zM8 1023h12v1h-12zM16 1027h4v1h-4zM16 1031h4v1h-4zM16 1034h4v1h-4zM16 1038h4v1h-4zM12 1042h8v1h-8zM16 1046h4v1h-4zM16 1049h4v1h-4zM16 1053h4v1h-4zM16 1057h4v1h-4zM8 1060h12v1h-12zM16 1064h4v1h-4zM16 1068h4v1h-4zM16 1071h4v1h-4zM16 1075h4v1h-4zM12 1079h8v1h-8zM16 1083h4v1h-4zM16 1086h4v1h-4zM16 1090h4v1h-4zM16 1094h4v1h-4zM8 1097h12v1h-12zM16 1101h4v1h-4zM16 1105h4v1h-4zM16 1108h4v1h-4zM16 1112h4v1h-4zM12 1116h8v1h-8zM16 1120h4v1h-4zM16 1123h4v1h-4zM16 1127h4v1h-4zM16 1131h4v1h-4zM8 1134h12v1h-12zM16 1138h4v1h-4zM16 1142h4v1h-4zM16 1145h4v1h-4zM16 1149h4v1h-4zM12 1153h8v1h-8zM16 1157h4v1h-4zM16 1160h4v1h-4zM16 1164h4v1h-4zM16 1168h4v1h-4zM8 1171h12v1h-12zM16 1175h4v1h-4z" fill="#f2f2f2"/>
<text x="38.4" y="8.2" font-size="12.9" fill="#f0f0f0" >-160</text>
<text x="75.4" y="8.2" font-size="12.9" fill="#f0f0f0" >-150</text>
<text x="112.4" y="8.2" font-size="12.9" fill="#f0f0f0" >-140</text>
<text x="149.4" y="8.2" font-size="12.9" fill="#f0f0f0" >-130</text>
<text x="186.4" y="8.2" font-size="12.9" fill="#f0f0f0" >-120</text>
<text x="223.4" y="8.2" font-size="12.9" fill="#f0f0f0" >-110</text>
<text x="260.4" y="8.2" font-size="12.9" fill="#f0f0f0" >-100</text>
<text x="297.4" y="8.2" font-size="12.9" fill="#f0f0f0" >-90</text>
<text x="334.4" y="8.2" font-size="12.9" fill="#f0f0f0" >-80</text>
<text x="371.4" y="8.2" font-size="12.9" fill="#f0f0f0" >-70</text>
<text x="408.4" y="8.2" font-size="12.9" fill="#f0f0f0" >-60</text>
<text x="445.4" y="8.2" font-size="12.9" fill="#f0f0f0" >-50</text>
<text x="482.4" y="8.2" font-size="12.9" fill="#f0f0f0" >-40</text>
<text x="519.4" y="8.2" font-size="12.9" fill="#f0f0f0" >-30</text>
<text x="556.4" y="8.2" font-size="12.9" fill="#f0f0f0" >-20</text>
<text x="593.4" y="8.2" font-size="12.9" fill="#f0f0f0" >-10</text>
<text x="630.4" y="8.2" font-size="12.9" fill="#f0f0f0" >0</text>
<text x="667.4" y="8.2" font-size="12.9" fill="#f0f0f0" >10</text>
<text x="704.4" y="8.2" font-size="12.9" fill="#f0f0f0" >20</text>
<text x="741.4" y="8.2" font-size="12.9" fill="#f0f0f0" >30</text>
<text x="778.4" y="8.2" font-size="12.9" fill="#f0f0f0" >40</text>
<text x="815.4" y="8.2" font-size="12.9" fill="#f0f0f0" >50</text>
<text x="1370.4" y="8.2" font-size="12.9" fill="#f0f0f0" >200</text>
<text x="1407.4" y="8.2" font-size="12.9" fill="#f0f0f0" >210</text>
<text x="1444.4" y="8.2" font-size="12.9" fill="#f0f0f0" >220</text>
<text x="1481.4" y="8.2" font-size="12.9" fill="#f0f0f0" >230</text>
<text x="1518.4" y="8.2" font-size="12.9" fill="#f0f0f0" >240</text>
<clipPath id="rb"><rect x="850" y="0" width="560" height="20"/></clipPath><g clip-path="url(#rb)">
<text x="889.7" y="8.2" font-size="12.9" fill="#6db4f5" >10</text>
<text x="926.7" y="8.2" font-size="12.9" fill="#6db4f5" >20</text>
<text x="963.7" y="8.2" font-size="12.9" fill="#6db4f5" >30</text>
<text x="1000.7" y="8.2" font-size="12.9" fill="#6db4f5" >40</text>
<text x="1037.7" y="8.2" font-size="12.9" fill="#6db4f5" >50</text>
<text x="1074.7" y="8.2" font-size="12.9" fill="#6db4f5" >60</text>
<text x="1111.7" y="8.2" font-size="12.9" fill="#6db4f5" >70</text>
<text x="1148.7" y="8.2" font-size="12.9" fill="#6db4f5" >80</text>
<text x="1185.7" y="8.2" font-size="12.9" fill="#6db4f5" >90</text>
<text x="1222.7" y="8.2" font-size="12.9" fill="#6db4f5" >100</text>
<text x="1259.7" y="8.2" font-size="12.9" fill="#6db4f5" >110</text>
<text x="1296.7" y="8.2" font-size="12.9" fill="#6db4f5" >120</text>
<text x="1333.7" y="8.2" font-size="12.9" fill="#6db4f5" >130</text>
<text x="1370.7" y="8.2" font-size="12.9" fill="#6db4f5" >140</text>
</g>
<text x="1" y="33.8" font-size="12.4" fill="#f0f0f0" >-</text>
<text x="1" y="46.1" font-size="12.4" fill="#f0f0f0" >1</text>
<text x="1" y="58.4" font-size="12.4" fill="#f0f0f0" >0</text>
<text x="1" y="70.8" font-size="12.4" fill="#f0f0f0" >0</text>
<text x="1" y="107.8" font-size="12.4" fill="#f0f0f0" >1</text>
<text x="1" y="120.1" font-size="12.4" fill="#f0f0f0" >0</text>
<text x="1" y="144.8" font-size="12.4" fill="#f0f0f0" >2</text>
<text x="1" y="157.1" font-size="12.4" fill="#f0f0f0" >0</text>
<text x="1" y="181.8" font-size="12.4" fill="#f0f0f0" >3</text>
<text x="1" y="194.1" font-size="12.4" fill="#f0f0f0" >0</text>
<text x="1" y="218.8" font-size="12.4" fill="#f0f0f0" >4</text>
<text x="1" y="231.1" font-size="12.4" fill="#f0f0f0" >0</text>
<text x="1" y="255.8" font-size="12.4" fill="#f0f0f0" >5</text>
<text x="1" y="268.1" font-size="12.4" fill="#f0f0f0" >0</text>
<text x="1" y="292.8" font-size="12.4" fill="#f0f0f0" >6</text>
<text x="1" y="305.1" font-size="12.4" fill="#f0f0f0" >0</text>
<text x="1" y="329.8" font-size="12.4" fill="#f0f0f0" >7</text>
<text x="1" y="342.1" font-size="12.4" fill="#f0f0f0" >0</text>
<text x="1" y="366.8" font-size="12.4" fill="#f0f0f0" >8</text>
<text x="1" y="379.1" font-size="12.4" fill="#f0f0f0" >0</text>
<text x="1" y="403.8" font-size="12.4" fill="#f0f0f0" >9</text>
<text x="1" y="416.1" font-size="12.4" fill="#f0f0f0" >0</text>
<text x="1" y="440.8" font-size="12.4" fill="#f0f0f0" >1</text>
<text x="1" y="453.1" font-size="12.4" fill="#f0f0f0" >0</text>
<text x="1" y="465.4" font-size="12.4" fill="#f0f0f0" >0</text>
<text x="1" y="477.8" font-size="12.4" fill="#f0f0f0" >1</text>
<text x="1" y="490.1" font-size="12.4" fill="#f0f0f0" >1</text>
<text x="1" y="502.4" font-size="12.4" fill="#f0f0f0" >0</text>
<text x="1" y="514.8" font-size="12.4" fill="#f0f0f0" >1</text>
<text x="1" y="527.1" font-size="12.4" fill="#f0f0f0" >2</text>
<text x="1" y="539.4" font-size="12.4" fill="#f0f0f0" >0</text>
<text x="1" y="551.8" font-size="12.4" fill="#f0f0f0" >1</text>
<text x="1" y="564.1" font-size="12.4" fill="#f0f0f0" >3</text>
<text x="1" y="576.4" font-size="12.4" fill="#f0f0f0" >0</text>
<text x="1" y="588.8" font-size="12.4" fill="#f0f0f0" >1</text>
<text x="1" y="601.1" font-size="12.4" fill="#f0f0f0" >4</text>
<text x="1" y="613.4" font-size="12.4" fill="#f0f0f0" >0</text>
<text x="1" y="625.8" font-size="12.4" fill="#f0f0f0" >1</text>
<text x="1" y="638.1" font-size="12.4" fill="#f0f0f0" >5</text>
<text x="1" y="650.4" font-size="12.4" fill="#f0f0f0" >0</text>
<text x="1" y="662.8" font-size="12.4" fill="#f0f0f0" >1</text>
<text x="1" y="675.1" font-size="12.4" fill="#f0f0f0" >6</text>
<text x="1" y="687.4" font-size="12.4" fill="#f0f0f0" >0</text>
<text x="1" y="699.8" font-size="12.4" fill="#f0f0f0" >1</text>
<text x="1" y="712.1" font-size="12.4" fill="#f0f0f0" >7</text>
<text x="1" y="724.4" font-size="12.4" fill="#f0f0f0" >0</text>
<text x="1" y="736.8" font-size="12.4" fill="#f0f0f0" >1</text>
<text x="1" y="749.1" font-size="12.4" fill="#f0f0f0" >8</text>
<text x="1" y="761.4" font-size="12.4" fill="#f0f0f0" >0</text>
<text x="1" y="773.8" font-size="12.4" fill="#f0f0f0" >1</text>
<text x="1" y="786.1" font-size="12.4" fill="#f0f0f0" >9</text>
<text x="1" y="798.4" font-size="12.4" fill="#f0f0f0" >0</text>
<text x="1" y="810.8" font-size="12.4" fill="#f0f0f0" >2</text>
<text x="1" y="823.1" font-size="12.4" fill="#f0f0f0" >0</text>
<text x="1" y="835.4" font-size="12.4" fill="#f0f0f0" >0</text>
<text x="1" y="847.8" font-size="12.4" fill="#f0f0f0" >2</text>
<text x="1" y="860.1" font-size="12.4" fill="#f0f0f0" >1</text>
<text x="1" y="872.4" font-size="12.4" fill="#f0f0f0" >0</text>
<text x="1" y="884.8" font-size="12.4" fill="#f0f0f0" >2</text>
<text x="1" y="897.1" font-size="12.4" fill="#f0f0f0" >2</text>
<text x="1" y="909.4" font-size="12.4" fill="#f0f0f0" >0</text>
<text x="1" y="921.8" font-size="12.4" fill="#f0f0f0" >2</text>
<text x="1" y="934.1" font-size="12.4" fill="#f0f0f0" >3</text>
<text x="1" y="946.4" font-size="12.4" fill="#f0f0f0" >0</text>
<text x="1" y="958.8" font-size="12.4" fill="#f0f0f0" >2</text>
<text x="1" y="971.1" font-size="12.4" fill="#f0f0f0" >4</text>
<text x="1" y="983.4" font-size="12.4" fill="#f0f0f0" >0</text>
<text x="1" y="995.8" font-size="12.4" fill="#f0f0f0" >2</text>
<text x="1" y="1008.1" font-size="12.4" fill="#f0f0f0" >5</text>
<text x="1" y="1020.4" font-size="12.4" fill="#f0f0f0" >0</text>
<text x="1" y="1032.8" font-size="12.4" fill="#f0f0f0" >2</text>
<text x="1" y="1045.1" font-size="12.4" fill="#f0f0f0" >6</text>
<text x="1" y="1057.4" font-size="12.4" fill="#f0f0f0" >0</text>
<text x="1" y="1069.8" font-size="12.4" fill="#f0f0f0" >2</text>
<text x="1" y="1082.1" font-size="12.4" fill="#f0f0f0" >7</text>
<text x="1" y="1094.4" font-size="12.4" fill="#f0f0f0" >0</text>
<text x="1" y="1106.8" font-size="12.4" fill="#f0f0f0" >2</text>
<text x="1" y="1119.1" font-size="12.4" fill="#f0f0f0" >8</text>
<text x="1" y="1131.4" font-size="12.4" fill="#f0f0f0" >0</text>
<text x="1" y="1143.8" font-size="12.4" fill="#f0f0f0" >2</text>
<text x="1" y="1156.1" font-size="12.4" fill="#f0f0f0" >9</text>
<text x="1" y="1168.4" font-size="12.4" fill="#f0f0f0" >0</text>
<text x="1" y="1180.8" font-size="12.4" fill="#f0f0f0" >3</text>
<rect x="0" y="0" width="20" height="20" fill="#404040" />
<rect x="870" y="0" width="1" height="20" fill="#e8604c" />
<rect x="850" y="2" width="8" height="6" fill="#eeeeee" />
<path d="M850 10h8l-8 10z" fill="#eeeeee"/>
<path d="M876 10h2v8h6v2h-8z" fill="#eeeeee"/>
<path d="M902 10h2v8h6v2h-8z" fill="#eeeeee"/>
<path d="M927 10h2v8h6v2h-8z" fill="#eeeeee"/>
<path d="M1293 10h2v10h-9v-2h7z" fill="#eeeeee"/>
<path d="M1356 18h7v2h-7z" fill="#eeeeee"/>
<path d="M1360 10h8v10z" fill="#eeeeee"/>
</svg>

<div id="dlg">
 <div class="tb"><svg class="ico" width="18" height="18" viewBox="0 0 18 18"><defs><linearGradient id="ig" x1="0" y1="0" x2="0" y2="1"><stop offset="0" stop-color="#3a7cc4"/><stop offset="1" stop-color="#1b4f94"/></linearGradient></defs><circle cx="9" cy="9" r="8" fill="url(#ig)"/><path d="M12.2 4.6L13.4 1.3A8 8 0 0 1 16.2 5.2L13.2 5.6z" fill="#143260"/><path d="M6.3 13L8.4 8.2L11.1 4.1L12.7 5L10.7 9.3z" fill="#ecc870"/><path d="M12.5 2.4L13 1.5" stroke="#e8eef8" stroke-width="0.7" fill="none"/><path d="M6.3 13L8.4 8.2L9.4 8.8z" fill="#fff3cf"/><path d="M11.1 4.1L12.5 1.9L13.7 2.6L12.7 5z" fill="#16243c"/><path d="M6.3 13L9.6 8.6" stroke="#8a5a14" stroke-width="0.5" fill="none"/></svg><span class="tt">Editar Mark With Variable Text</span><svg class="cx" width="12" height="12" viewBox="0 0 12 12"><path d="M1 1L11 11M11 1L1 11" stroke="#b4b4b4" stroke-width="1.1" fill="none"/></svg></div>
 <span class="lb" style="left:9.2px;top:44.4px;letter-spacing:0.15px">Etiqueta:</span>
 <div class="combo"><span>Marca 1</span><i></i></div>
 <span class="lb" style="left:9.2px;top:71.8px;letter-spacing:0.38px">Texto para insertar:</span>
 <div class="inp"><span>Date</span></div>
 <div class="btn" style="left:260.1px;width:55.1px"><span>Aceptar</span></div>
 <div class="btn" style="left:323.1px;width:59.6px"><span>Cancelar</span></div>
</div>

</body></html>
